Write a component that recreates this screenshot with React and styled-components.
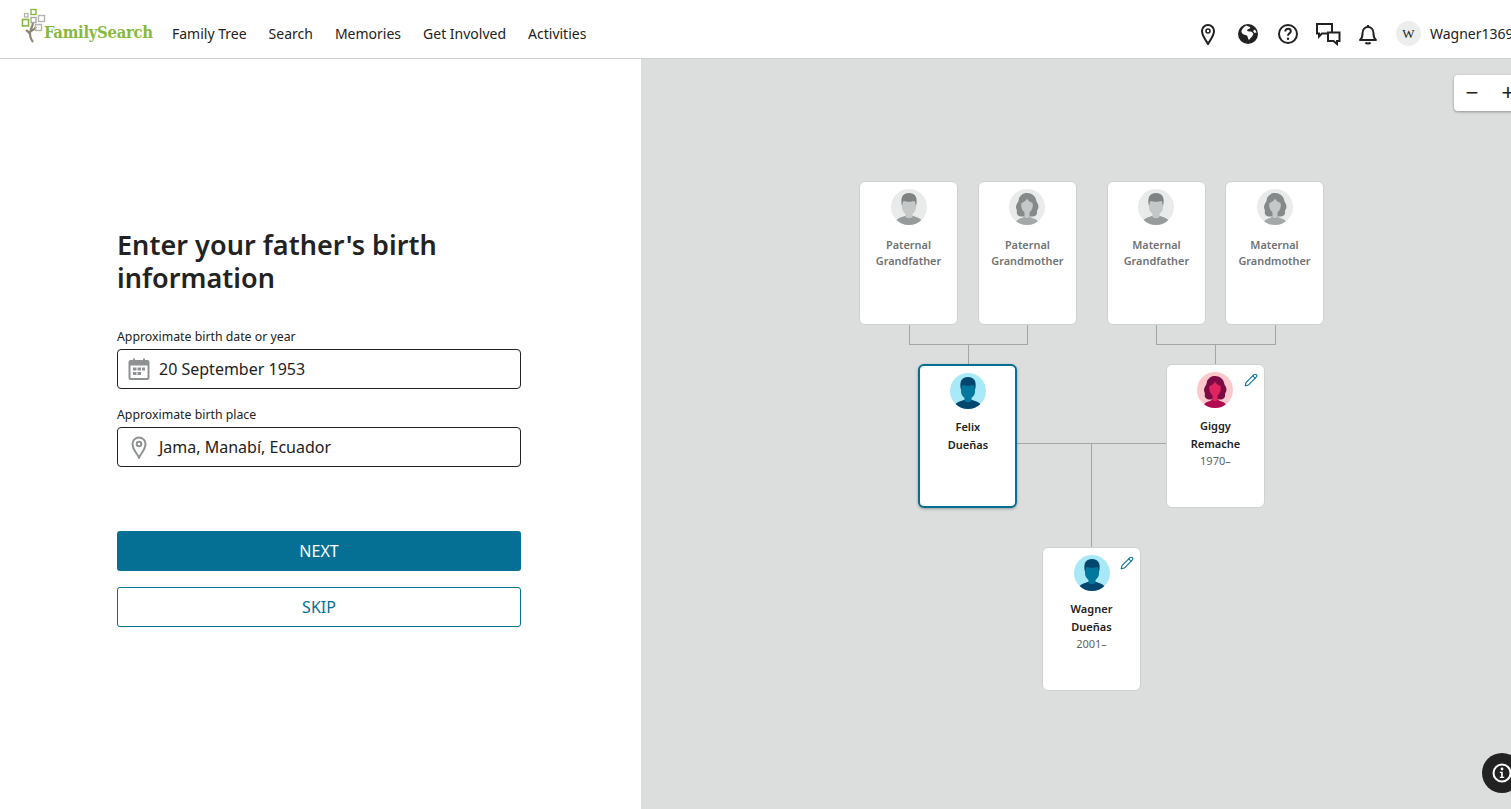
import styled, { createGlobalStyle } from "styled-components";
import { Pencil } from "lucide-react";

const NAV = ["Family Tree", "Search", "Memories", "Get Involved", "Activities"];

// card spots on the tree canvas, relative to the grey panel
const PLACEHOLDERS = [
  { x: 218, y: 122, kind: "grey-m", lines: ["Paternal", "Grandfather"] },
  { x: 336.9, y: 122, kind: "grey-f", lines: ["Paternal", "Grandmother"] },
  { x: 465.9, y: 122, kind: "grey-m", lines: ["Maternal", "Grandfather"] },
  { x: 584, y: 122, kind: "grey-f", lines: ["Maternal", "Grandmother"] },
];
const PEOPLE = [
  { x: 277.4, y: 305, kind: "male", lines: ["Felix", "Dueñas"], active: true },
  { x: 524.9, y: 305, kind: "female", lines: ["Giggy", "Remache"], date: "1970–", edit: true },
  { x: 401, y: 488, kind: "male", lines: ["Wagner", "Dueñas"], date: "2001–", edit: true },
];
const LINES = [
  { x: 268, y: 266, w: 1, h: 20 },
  { x: 386, y: 266, w: 1, h: 20 },
  { x: 268, y: 285, w: 119, h: 1 },
  { x: 327, y: 285, w: 1, h: 20 },
  { x: 515, y: 266, w: 1, h: 20 },
  { x: 634, y: 266, w: 1, h: 20 },
  { x: 515, y: 285, w: 120, h: 1 },
  { x: 574, y: 285, w: 1, h: 20 },
  { x: 376, y: 384, w: 150, h: 1 },
  { x: 450, y: 384, w: 1, h: 104 },
];

const PALETTE = {
  "grey-m": { bg: "#e9ebeb", skin: "#c5c8c9", hair: "#7f8384", body: "#989b9c" },
  "grey-f": { bg: "#e9ebeb", skin: "#c5c8c9", hair: "#85898a", body: "#a5a8a9" },
  male: { bg: "#a8e9f8", skin: "#02789f", hair: "#03476f", body: "#03476f" },
  female: { bg: "#fbc8cc", skin: "#df2460", hair: "#7d0a45", body: "#b10a50" },
};

function Avatar({ kind }) {
  const c = PALETTE[kind];
  const female = kind === "female" || kind === "grey-f";
  return (
    <svg width="36" height="36" viewBox="0 0 36 36">
      <defs>
        <clipPath id={`clip-${kind}`}>
          <circle cx="18" cy="18" r="18" />
        </clipPath>
      </defs>
      <g clipPath={`url(#clip-${kind})`}>
        <rect width="36" height="36" fill={c.bg} />
        {female ? (
          <>
            <path d="M18 4c-2.500 0-4 .5-5.500 2-2 1.500-2.500 3-2.800 5-.3 2.500-2.700 4-2.700 7 0 2 1.300 3 .8 5-.5 2.500 2 4.500 4.700 4.500h11c2.700 0 5-2 4.500-4.500-.3-2 1.500-3 1.500-5.500 0-3-2.200-4-2.500-7C26 7 23 4 18 4z" fill={c.hair} />
            <path d="M6 36c.5-4 2.500-6 7-7l2.500-1.500h5L23 29c4.500 1 6.500 3 7 7z" fill={c.body} />
            <path d="M15.500 21h5v6.500c-1 2-4 2-5 0z" fill={c.skin} />
            <ellipse cx="18" cy="16.500" rx="5.800" ry="7.500" fill={c.skin} />
            <path d="M12 14c2.500-.5 4.800-2 6-4.500 1 2 3 3.800 6 4.500-.3-3-2-6-6-6s-5.700 3-6 6z" fill={c.hair} />
          </>
        ) : (
          <>
            <path d="M4 36c.5-5 2.500-6.500 7-8l4-1.500h6l4 1.500c4.500 1.500 6.500 3 7 8z" fill={c.body} />
            <path d="M11 11h14v8c0 3-2.500 5-3.500 6v3c-1 1.500-6 1.500-7 0v-3c-1-1-3.500-3-3.500-6z" fill={c.skin} />
            <path d="M11 17c-.9-3.500-.9-6.500 0-9 1-2.700 4-4 7-4s6 1.300 7 4c.9 2.500.9 5.500 0 9-.5-1.800-.5-3.800-1.500-5-3 1-8 1-11 0-1 1.200-1 3.200-1.500 5z" fill={c.hair} />
          </>
        )}
      </g>
    </svg>
  );
}

function Logo() {
  return (
    <svg width="32" height="36" viewBox="0 0 32 36" fill="none">
      <path d="M13 34c-3-4-4-8-2-13 1-2 2-4 2-7M11 23c2-1 4-2 5-4M10 26c-1-2-3-3-4-4" stroke="#8b8672" strokeWidth="2.200" />
      <rect x="11" y="1.500" width="5" height="5" stroke="#86b940" strokeWidth="1.400" />
      <rect x="4.500" y="5.500" width="3.500" height="3.500" stroke="#b4b4ae" strokeWidth="1.300" />
      <rect x="11" y="9.500" width="5" height="5" stroke="#a9a9a3" strokeWidth="1.400" />
      <rect x="18.500" y="7.500" width="6" height="6" stroke="#b4b4ae" strokeWidth="1.400" />
      <rect x="2.500" y="11.500" width="6" height="6.500" stroke="#86b940" strokeWidth="1.600" />
      <rect x="15.500" y="16.500" width="6" height="6" stroke="#b4b4ae" strokeWidth="1.400" />
    </svg>
  );
}

const Icon = ({ children }) => (
  <svg width="24" height="24" viewBox="0 0 24 24" fill="none" stroke="#222" strokeWidth="2" strokeLinejoin="round">
    {children}
  </svg>
);

const PinIcon = () => (
  <Icon>
    <path d="M12 22c-1.500-3-6-8-6-13a6 6 0 0 1 12 0c0 5-4.500 10-6 13z" />
    <circle cx="12" cy="9" r="2" strokeWidth="1.600" />
  </Icon>
);
const GlobeIcon = () => (
  <svg width="24" height="24" viewBox="0 0 24 24">
    <circle cx="12" cy="12" r="10" fill="#222" />
    <path d="M10 3.500c2 .5 4 1 4.500 2.500-1 1-3 1-3.500 2.500 1 1.500 3.500.5 5 1.500l1.500 2c-1 2.500-3 4-4.500 6-1-.5-1-3-2-4.500-2-.5-5-1-5.500-3.500C5 8.500 7.500 5 10 3.500z" fill="#fff" />
    <path d="M19 7.500l1.500 3-2 .5-1.500-2z" fill="#fff" />
  </svg>
);
const HelpIcon = () => (
  <Icon>
    <circle cx="12" cy="12" r="9" />
    <path d="M9.300 9.500c0-1.600 1.200-2.700 2.800-2.700s2.700 1 2.700 2.400c0 2.200-2.800 2.200-2.800 4.600" strokeLinejoin="miter" />
    <circle cx="12" cy="16.800" r="1.200" fill="#222" stroke="none" />
  </Icon>
);
const ChatIcon = () => (
  <svg width="26" height="24" viewBox="0 0 26 24" fill="none" stroke="#222" strokeWidth="2">
    <path d="M2 2h15v9.500H7l-3 3v-3H2z" />
    <path d="M13 10.500h11.500v8.500H22v3l-3.500-3H13z" fill="#fff" />
  </svg>
);
const BellIcon = () => (
  <Icon>
    <path d="M4 18c2-1.500 2.500-3 2.500-6.500C6.500 7.500 9 5 12 5s5.500 2.500 5.500 6.500c0 3.500.5 5 2.500 6.500z" />
    <path d="M9.500 20.500c1 1.200 4 1.200 5 0" />
    <path d="M12 3v2" />
  </Icon>
);
const CalendarIcon = () => (
  <svg width="24" height="24" viewBox="0 0 24 24" fill="none" stroke="#8f9293" strokeWidth="2">
    <rect x="2.500" y="4" width="19" height="18" rx="1" />
    <path d="M7 1.500v4M17 1.500v4" />
    <path d="M2.500 5h19v3.500h-19z" fill="#8f9293" stroke="none" />
    <path d="M6 10.500h3.500v3H6zM10.500 10.500H14v3h-3.500zM15 10.500h3v3h-3zM6 15h3.500v3H6zM10.500 15H14v3h-3.500z" fill="#8f9293" stroke="none" />
  </svg>
);
const PlaceIcon = () => (
  <svg width="24" height="24" viewBox="0 0 24 24" fill="none" stroke="#8f9293" strokeWidth="2">
    <path d="M12 22.500c-1.500-3.500-6.500-8-6.500-13.500a6.500 6.500 0 0 1 13 0c0 5.500-5 10-6.500 13.500z" />
    <circle cx="12" cy="9" r="2.300" />
  </svg>
);

export default function App() {
  return (
    <Page>
      <GlobalStyle />
      <Header>
        <LogoLink>
          <Logo />
          <LogoText>FamilySearch</LogoText>
        </LogoLink>
        <Nav>
          {NAV.map((item) => (
            <NavItem key={item}>{item}</NavItem>
          ))}
        </Nav>
        <Tools>
          <ToolIcon><PinIcon /></ToolIcon>
          <ToolIcon><GlobeIcon /></ToolIcon>
          <ToolIcon><HelpIcon /></ToolIcon>
          <ToolIcon><ChatIcon /></ToolIcon>
          <ToolIcon><BellIcon /></ToolIcon>
          <UserBadge>W</UserBadge>
          <UserName>Wagner1369</UserName>
        </Tools>
      </Header>
      <Main>
        <FormPanel>
          <Heading>Enter your father's birth information</Heading>
          <FieldLabel>Approximate birth date or year</FieldLabel>
          <InputBox>
            <CalendarIcon />
            <InputValue>20 September 1953</InputValue>
          </InputBox>
          <FieldLabel>Approximate birth place</FieldLabel>
          <InputBox>
            <PlaceIcon />
            <InputValue>Jama, Manabí, Ecuador</InputValue>
          </InputBox>
          <NextButton>NEXT</NextButton>
          <SkipButton>SKIP</SkipButton>
        </FormPanel>
        <TreePanel>
          <ZoomControl>
            <ZoomGlyph>−</ZoomGlyph>
            <ZoomGlyph>+</ZoomGlyph>
          </ZoomControl>
          {LINES.map((l, i) => (
            <Connector key={i} $x={l.x} $y={l.y} $w={l.w} $h={l.h} />
          ))}
          {PLACEHOLDERS.map((p) => (
            <Card key={p.lines.join()} $x={p.x} $y={p.y}>
              <Avatar kind={p.kind} />
              <PlaceholderText>
                {p.lines[0]}
                <br />
                {p.lines[1]}
              </PlaceholderText>
            </Card>
          ))}
          {PEOPLE.map((p) => (
            <Card key={p.lines.join()} $x={p.x} $y={p.y} $active={p.active}>
              <Avatar kind={p.kind} />
              <PersonName>
                {p.lines[0]}
                <br />
                {p.lines[1]}
              </PersonName>
              {p.date && <PersonDate>{p.date}</PersonDate>}
              {p.edit && (
                <EditMark>
                  <Pencil size={14} strokeWidth={1.8} />
                </EditMark>
              )}
            </Card>
          ))}
          <InfoButton>
            <svg width="22" height="22" viewBox="0 0 22 22" fill="none">
              <circle cx="11" cy="11" r="8.500" stroke="#fff" strokeWidth="2" />
              <circle cx="11" cy="7" r="1.400" fill="#fff" />
              <path d="M8.800 9.700h3v5h1.400v1.300H8.800v-1.300h1.300v-3.700H8.800z" fill="#fff" />
            </svg>
          </InfoButton>
        </TreePanel>
      </Main>
    </Page>
  );
}

const GlobalStyle = createGlobalStyle`
  html, body {
    margin: 0;
    padding: 0;
    height: 100%;
    overflow: hidden;
  }
  body {
    font-family: "Noto Sans", "Open Sans", sans-serif;
    color: #222;
    background: #fff;
  }
`;

const Page = styled.div`
  display: flex;
  flex-direction: column;
  height: 100vh;
  overflow: hidden;
`;

const Header = styled.header`
  display: flex;
  align-items: center;
  flex: 0 0 59px;
  box-sizing: border-box;
  border-bottom: 1px solid #cfd1d1;
  padding: 9px 0 0 20px;
  background: #fff;
`;
const LogoLink = styled.div`
  display: flex;
  align-items: flex-end;
  width: 152px;
  height: 36px;
  margin-top: -15px;
`;
const LogoText = styled.span`
  font-family: "DejaVu Serif", "Liberation Serif", serif;
  font-stretch: condensed;
  font-weight: 700;
  font-size: 16.5px;
  line-height: 20px;
  letter-spacing: -0.3px;
  color: #87b941;
  margin-left: -8px;
  margin-bottom: 1px;
  white-space: nowrap;
`;
const Nav = styled.nav`
  display: flex;
  gap: 22px;
`;
const NavItem = styled.span`
  font-size: 14px;
  line-height: 20px;
  color: #222;
`;
const Tools = styled.div`
  display: flex;
  align-items: center;
  margin-left: auto;
  flex: 0 0 323px;
  white-space: nowrap;
  overflow: hidden;
`;
const ToolIcon = styled.span`
  display: flex;
  justify-content: center;
  flex: 0 0 40px;
`;
const UserBadge = styled.span`
  flex: 0 0 25px;
  display: flex;
  align-items: center;
  justify-content: center;
  height: 25px;
  margin-left: 8px;
  border-radius: 50%;
  background: #eceeee;
  font-family: "Liberation Serif", serif;
  font-size: 13px;
`;
const UserName = styled.span`
  margin-left: 9px;
  font-size: 14px;
`;

const Main = styled.main`
  display: flex;
  flex: 1;
  min-height: 0;
`;
const FormPanel = styled.section`
  flex: 0 0 641px;
  box-sizing: border-box;
  padding: 169px 120px 0 117px;
  background: #fff;
`;
const Heading = styled.h1`
  margin: 0 0 34px;
  font-size: 27px;
  font-weight: 600;
  line-height: 33px;
  letter-spacing: 0.05px;
  color: #222;
`;
const FieldLabel = styled.div`
  font-size: 12.3px;
  line-height: 18px;
  margin-bottom: 3px;
  color: #222;
`;
const InputBox = styled.div`
  display: flex;
  align-items: center;
  gap: 8px;
  height: 40px;
  box-sizing: border-box;
  border: 1px solid #222;
  border-radius: 4px;
  padding-left: 9px;
  margin-bottom: 17px;
`;
const InputValue = styled.span`
  font-size: 16px;
  color: #222;
`;
const BaseButton = styled.button`
  display: block;
  width: 100%;
  height: 40px;
  box-sizing: border-box;
  border-radius: 3px;
  font-family: inherit;
  font-size: 16px;
`;
const NextButton = styled(BaseButton)`
  margin-top: 64px;
  border: 0;
  background: #067094;
  color: #fff;
`;
const SkipButton = styled(BaseButton)`
  margin-top: 16px;
  border: 1px solid #067094;
  background: #fff;
  color: #067094;
`;

const TreePanel = styled.section`
  position: relative;
  flex: 1;
  background: #dcdedd;
  overflow: hidden;
`;
const ZoomControl = styled.div`
  position: absolute;
  left: 813px;
  top: 16px;
  display: flex;
  align-items: center;
  gap: 18px;
  width: 80px;
  height: 36px;
  padding-left: 9px;
  box-sizing: border-box;
  background: #fff;
  border-radius: 4px;
  box-shadow: 0 1px 3px rgba(0, 0, 0, 0.35);
`;
const ZoomGlyph = styled.span`
  width: 18px;
  text-align: center;
  font-family: "Liberation Sans", sans-serif;
  font-size: 22px;
  line-height: 22px;
  color: #222;
`;
const Connector = styled.div`
  position: absolute;
  left: ${(p) => p.$x}px;
  top: ${(p) => p.$y}px;
  width: ${(p) => p.$w}px;
  height: ${(p) => p.$h}px;
  background: #a3a6a6;
`;
const Card = styled.div`
  position: absolute;
  left: ${(p) => p.$x}px;
  top: ${(p) => p.$y}px;
  display: flex;
  flex-direction: column;
  align-items: center;
  width: 99px;
  height: 144px;
  box-sizing: border-box;
  padding-top: 7px;
  background: #fff;
  border: ${(p) => (p.$active ? "2px solid #067094" : "1px solid #cfd1d1")};
  border-radius: 6px;
  box-shadow: ${(p) => (p.$active ? "0 1px 3px rgba(0,0,0,0.3)" : "none")};
`;
const PlaceholderText = styled.div`
  margin-top: 12px;
  font-size: 10.9px;
  font-weight: 600;
  line-height: 16px;
  text-align: center;
  color: #6f7375;
`;
const PersonName = styled.div`
  margin-top: 9px;
  font-size: 11px;
  font-weight: 600;
  line-height: 18px;
  text-align: center;
  color: #222;
`;
const PersonDate = styled.div`
  font-size: 11px;
  line-height: 16px;
  color: #5f6366;
`;
const EditMark = styled.span`
  position: absolute;
  top: 8px;
  right: 6px;
  display: flex;
  color: #067094;
`;
const InfoButton = styled.div`
  position: absolute;
  left: 841px;
  top: 694px;
  display: flex;
  align-items: center;
  justify-content: center;
  width: 40px;
  height: 40px;
  border-radius: 50%;
  background: #222;
`;
